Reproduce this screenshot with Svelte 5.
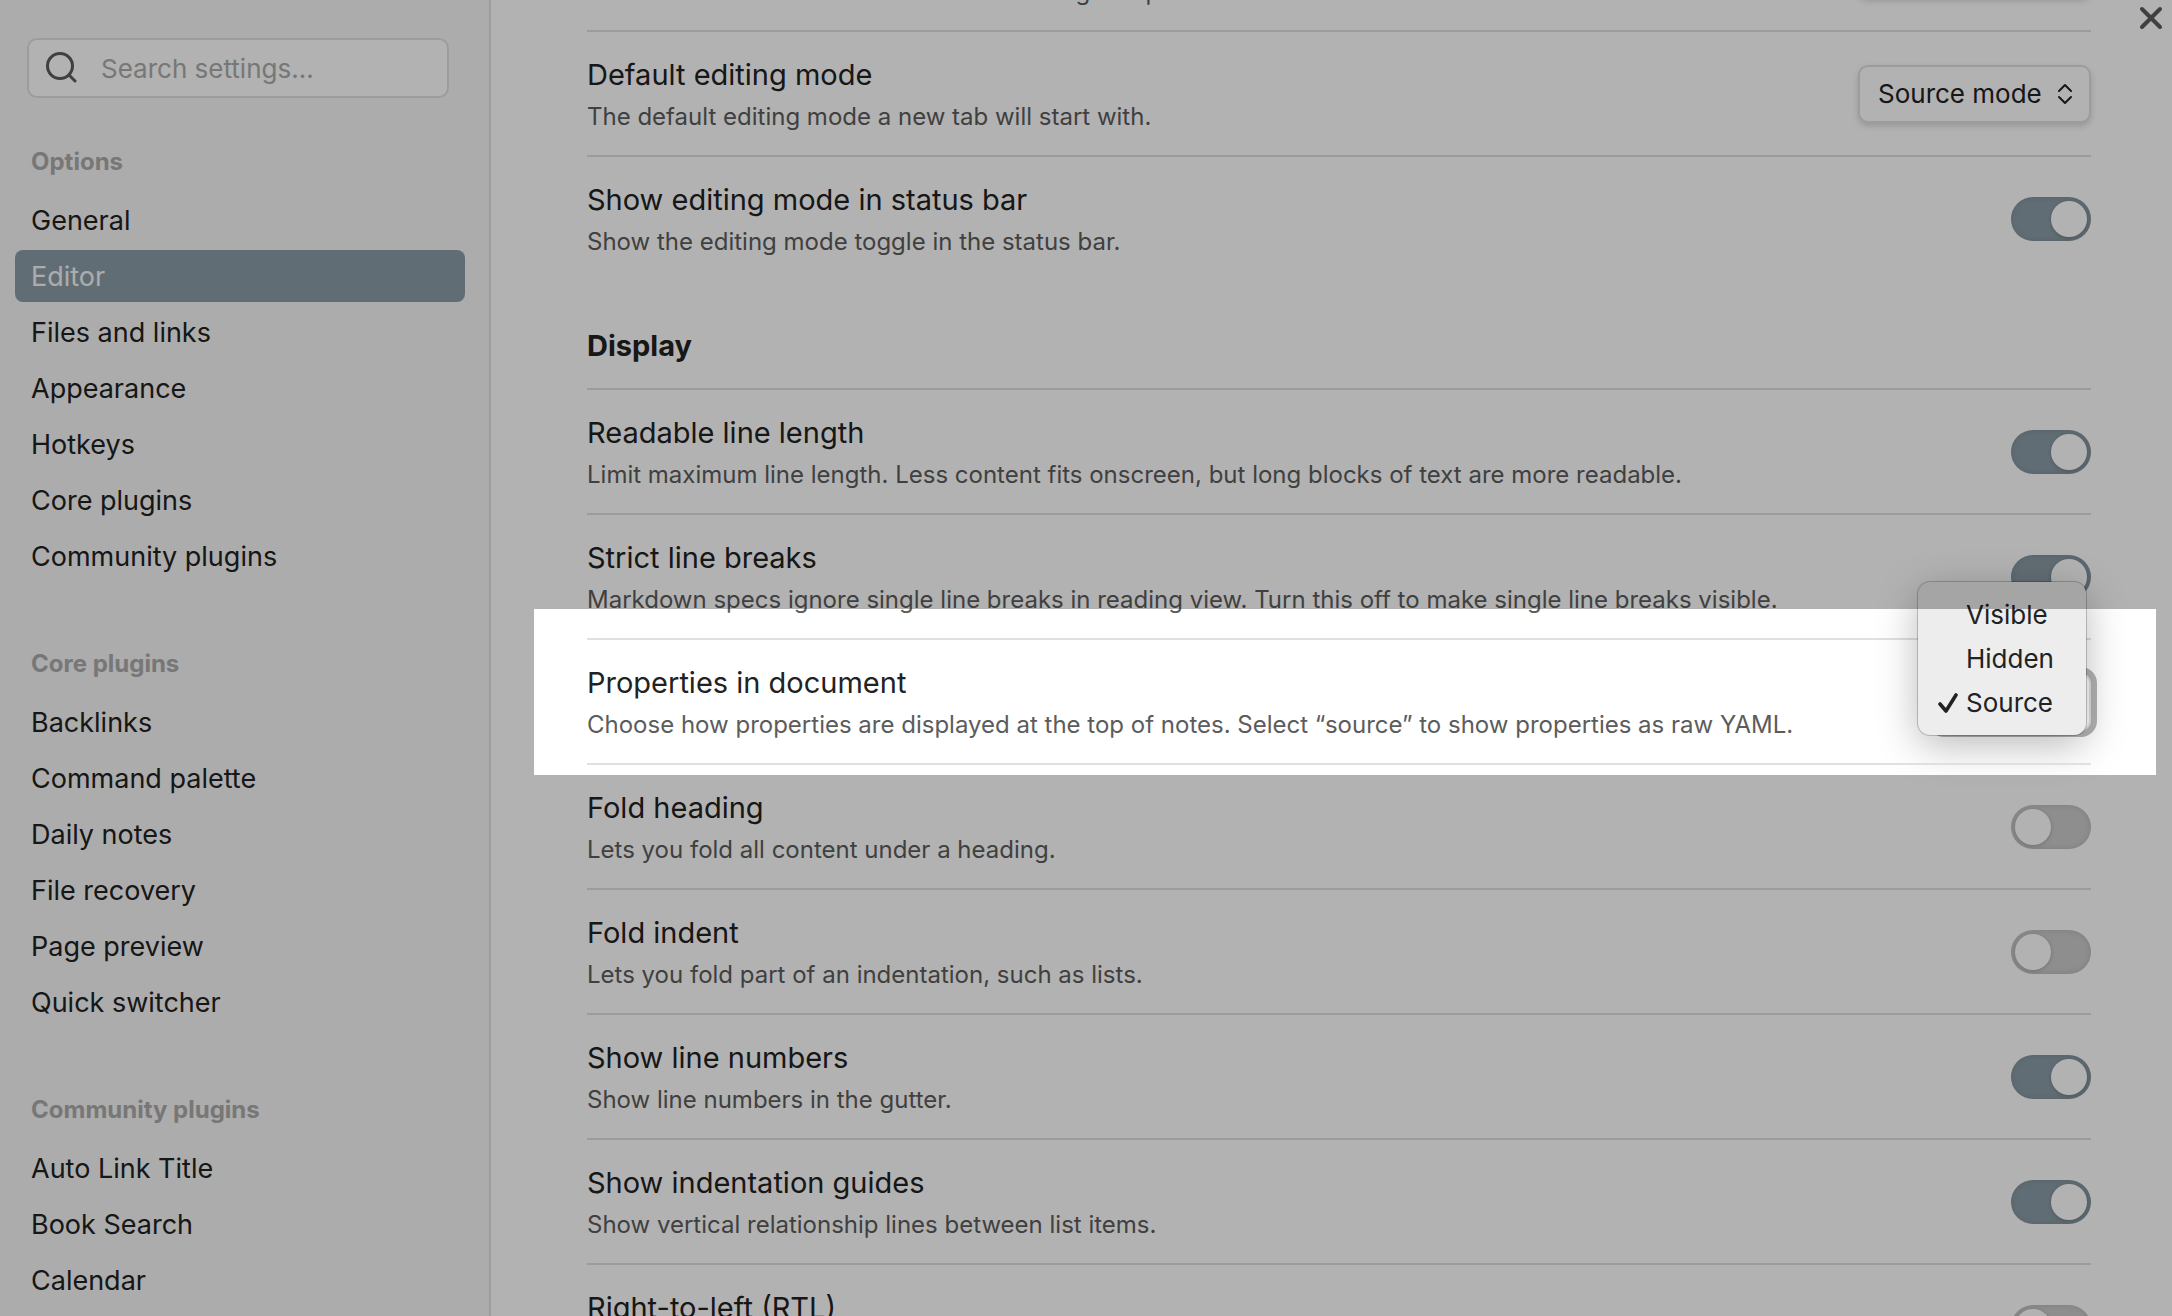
<script>
  let search = $state("");
  let active = $state("Editor");

  const groups = [
    {
      name: "Options",
      items: ["General", "Editor", "Files and links", "Appearance", "Hotkeys", "Core plugins", "Community plugins"],
    },
    {
      name: "Core plugins",
      items: ["Backlinks", "Command palette", "Daily notes", "File recovery", "Page preview", "Quick switcher"],
    },
    {
      name: "Community plugins",
      items: ["Auto Link Title", "Book Search", "Calendar"],
    },
  ];

  const general = [
    {
      id: "default-view",
      name: "Default view for new tabs",
      desc: "The default view that a new markdown tab gets opened in.",
      options: ["Editing view", "Reading view"],
      value: "Editing view",
    },
    {
      id: "editing-mode",
      name: "Default editing mode",
      desc: "The default editing mode a new tab will start with.",
      options: ["Source mode", "Live Preview"],
      value: "Source mode",
    },
    {
      id: "status-bar",
      name: "Show editing mode in status bar",
      desc: "Show the editing mode toggle in the status bar.",
      on: true,
    },
  ];

  const display = [
    {
      id: "line-length",
      name: "Readable line length",
      desc: "Limit maximum line length. Less content fits onscreen, but long blocks of text are more readable.",
      on: true,
    },
    {
      id: "strict-breaks",
      name: "Strict line breaks",
      desc: "Markdown specs ignore single line breaks in reading view. Turn this off to make single line breaks visible.",
      on: true,
    },
    {
      id: "properties",
      name: "Properties in document",
      desc: "Choose how properties are displayed at the top of notes. Select “source” to show properties as raw YAML.",
      options: ["Visible", "Hidden", "Source"],
      value: "Source",
      open: true,
    },
    { id: "fold-heading", name: "Fold heading", desc: "Lets you fold all content under a heading.", on: false },
    { id: "fold-indent", name: "Fold indent", desc: "Lets you fold part of an indentation, such as lists.", on: false },
    { id: "line-numbers", name: "Show line numbers", desc: "Show line numbers in the gutter.", on: true },
    {
      id: "indent-guides",
      name: "Show indentation guides",
      desc: "Show vertical relationship lines between list items.",
      on: true,
    },
    {
      id: "rtl",
      name: "Right-to-left (RTL)",
      desc: "Sets the default text direction of notes to right-to-left.",
      on: false,
    },
  ];
</script>

{#snippet setting(row)}
  <div class="setting" class:spotlight={row.open}>
    <div class="info">
      <label class="name" for={row.id}>{row.name}</label>
      <div class="desc">{row.desc}</div>
    </div>
    {#if row.options}
      <div class="dropdown" class:open={row.open}>
        <select id={row.id} value={row.value}>
          {#each row.options as option}
            <option>{option}</option>
          {/each}
        </select>
        <svg class="chevrons" width="16" height="22" viewBox="0 0 16 22" aria-hidden="true">
          <path d="M2 8l6-6 6 6M2 14l6 6 6-6" />
        </svg>
        {#if row.open}
          <ul class="menu" role="listbox" aria-label={row.name}>
            {#each row.options as option}
              <li role="option" aria-selected={option === row.value}>
                <span class="tick">
                  {#if option === row.value}
                    <svg width="20" height="20" viewBox="0 0 20 20" aria-hidden="true">
                      <path d="M2 11l6 7L18 2" />
                    </svg>
                  {/if}
                </span>
                {option}
              </li>
            {/each}
          </ul>
        {/if}
      </div>
    {:else}
      <input class="toggle" type="checkbox" id={row.id} checked={row.on} />
    {/if}
  </div>
{/snippet}

<div class="modal">
  <nav class="sidebar">
    <div class="search">
      <svg width="32" height="32" viewBox="0 0 32 32" aria-hidden="true">
        <circle cx="15" cy="14" r="12.5" />
        <path d="M24 23l6 6" />
      </svg>
      <input type="text" aria-label="Search settings" placeholder="Search settings..." bind:value={search} />
    </div>
    {#each groups as group}
      <section class="group">
        <h2>{group.name}</h2>
        {#each group.items as item}
          <button class="nav-item" class:active={group.name === "Options" && item === active} onclick={() => (active = item)}>
            {item}
          </button>
        {/each}
      </section>
    {/each}
  </nav>

  <main class="content">
    <div class="scrolled">
      {#each general as row}
        {@render setting(row)}
      {/each}
      <h1>Display</h1>
      {#each display as row}
        {@render setting(row)}
      {/each}
    </div>
  </main>

  <button class="close" aria-label="Close">
    <svg width="24" height="24" viewBox="0 0 24 24" aria-hidden="true">
      <path d="M3 3l18 18M21 3L3 21" />
    </svg>
  </button>
</div>

<style>
  :global(body) {
    margin: 0;
  }

  .modal {
    position: relative;
    display: flex;
    height: 100vh;
    overflow: hidden;
    background: #fff;
    color: #222;
    font-family: Inter, "Liberation Sans", sans-serif;
    font-size: 27px;
  }
  .modal * {
    box-sizing: border-box;
  }

  button,
  input,
  select {
    font-family: inherit;
    color: inherit;
  }
  svg {
    fill: none;
    stroke: currentColor;
    stroke-linecap: round;
    stroke-linejoin: round;
  }

  /* sidebar */
  .sidebar {
    flex: none;
    width: 491px;
    padding: 38px 24px 0 15px;
    background: #f6f6f6;
    border-right: 2px solid #e0e0e0;
  }
  .search {
    display: flex;
    align-items: center;
    gap: 24px;
    height: 60px;
    margin: 0 16px 46px 12px;
    padding: 0 16px;
    background: #fff;
    border: 2px solid #e0e0e0;
    border-radius: 10px;
  }
  .search svg {
    flex: none;
    color: #5c5c5c;
    stroke-width: 3;
  }
  .search input {
    flex: 1;
    min-width: 0;
    padding: 0;
    border: 0;
    outline: 0;
    background: none;
    font-size: 26px;
  }
  .search input::placeholder {
    color: #ababab;
    opacity: 1;
  }

  .group {
    display: flex;
    flex-direction: column;
    gap: 4px;
    margin-bottom: 64px;
  }
  .group h2 {
    margin: 0 0 10px;
    padding: 0 16px;
    color: #ababab;
    font-size: 24px;
    font-weight: 700;
    line-height: 36px;
  }
  .nav-item {
    height: 52px;
    padding: 0 16px;
    border: 0;
    border-radius: 8px;
    background: none;
    font-size: 27px;
    text-align: left;
  }
  .nav-item.active {
    background: #8c9da7;
    color: #f6f6f6;
  }

  /* settings list */
  .content {
    flex: 1;
    min-width: 0;
    padding: 0 81px 0 96px;
  }
  .scrolled {
    margin-top: -95px;
  }
  h1 {
    margin: 0;
    padding: 48px 0 24px;
    font-size: 29px;
    font-weight: 700;
    line-height: 36px;
  }
  .setting {
    position: relative;
    display: flex;
    align-items: center;
    justify-content: space-between;
    height: 125px;
    border-top: 2px solid #e0e0e0;
  }
  .info {
    padding-top: 4px;
  }
  .name {
    display: block;
    font-size: 29px;
    line-height: 42px;
  }
  .desc {
    color: #5c5c5c;
    font-size: 24px;
    line-height: 42px;
  }

  /* everything outside the highlighted row is dimmed */
  .spotlight::after {
    content: "";
    position: absolute;
    z-index: 10;
    inset: -31px -65px -12px -53px;
    box-shadow: 0 0 0 3000px rgba(0, 0, 0, 0.3);
    pointer-events: none;
  }

  .dropdown {
    position: relative;
    display: grid;
    align-items: center;
  }
  .dropdown > * {
    grid-area: 1 / 1;
  }
  select {
    height: 58px;
    padding: 0 47px 0 18px;
    appearance: none;
    background: #fff;
    border: 2px solid #e0e0e0;
    border-radius: 10px;
    box-shadow: 0 3px 6px rgba(0, 0, 0, 0.16);
    font-size: 26px;
  }
  .chevrons {
    justify-self: end;
    margin-right: 18px;
    stroke-width: 2;
    pointer-events: none;
  }
  .open select {
    box-shadow: 0 0 0 6px #b4b4b4;
  }

  .menu {
    position: absolute;
    right: 5px;
    bottom: -4px;
    width: 168px;
    margin: 0;
    padding: 11px 16px 10px;
    list-style: none;
    background: #ededed;
    border-radius: 12px;
    box-shadow:
      0 0 0 1px rgba(0, 0, 0, 0.2),
      0 10px 40px rgba(0, 0, 0, 0.28);
    font-size: 26px;
    line-height: 44px;
  }
  .menu li {
    display: flex;
    align-items: center;
    gap: 8px;
  }
  .tick {
    display: flex;
    flex: none;
    width: 24px;
    justify-content: flex-end;
  }
  .tick svg {
    stroke-width: 3.6;
  }

  .toggle {
    flex: none;
    width: 80px;
    height: 44px;
    margin: 0;
    padding: 4px;
    appearance: none;
    background: #ccc;
    border-radius: 22px;
    box-shadow: inset 0 0 6px rgba(0, 0, 0, 0.12);
  }
  .toggle::before {
    content: "";
    display: block;
    width: 36px;
    height: 36px;
    background: #fff;
    border-radius: 50%;
    box-shadow: 0 1px 4px rgba(0, 0, 0, 0.2);
  }
  .toggle:checked {
    background-color: #8c9da7;
  }
  .toggle:checked::before {
    margin-left: auto;
  }

  .close {
    position: absolute;
    top: 6px;
    right: 9px;
    display: flex;
    padding: 0;
    border: 0;
    background: none;
    color: #5c5c5c;
  }
  .close svg {
    stroke-width: 4;
  }
</style>
